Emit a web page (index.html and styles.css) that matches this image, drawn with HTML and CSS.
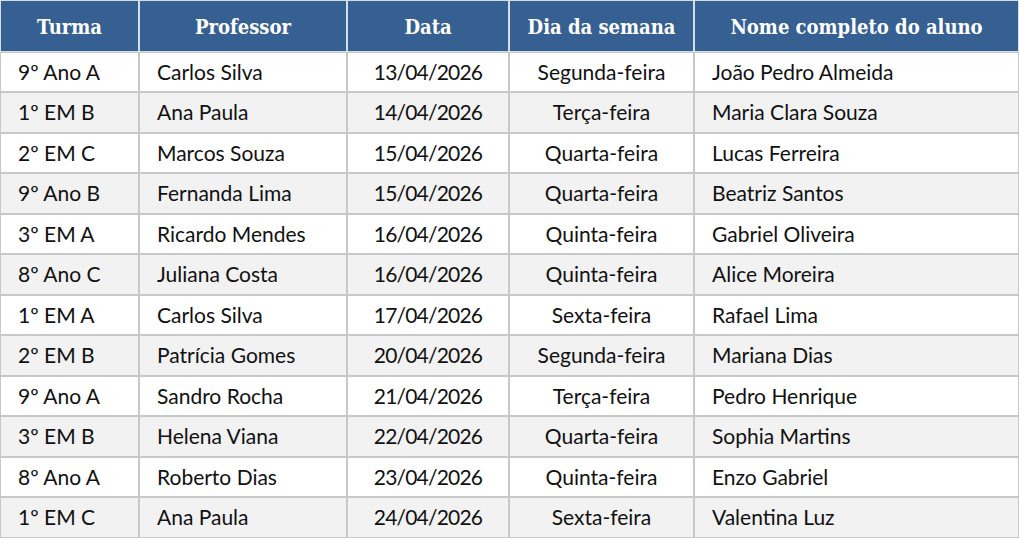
FILE: index.html
```html
<!DOCTYPE html>
<html lang="pt">
<head>
<meta charset="utf-8">
<link rel="stylesheet" href="styles.css">
</head>
<body>
<table class="grid">
  <colgroup>
    <col class="c1"><col class="c2"><col class="c3"><col class="c4"><col class="c5">
  </colgroup>
  <thead>
    <tr><th>Turma</th><th>Professor</th><th>Data</th><th>Dia da semana</th><th>Nome completo do aluno</th></tr>
  </thead>
  <tbody>
    <tr><td>9º Ano A</td><td>Carlos Silva</td><td class="ctr num">13/04/2026</td><td class="ctr">Segunda-feira</td><td>João Pedro Almeida</td></tr>
    <tr><td>1º EM B</td><td>Ana Paula</td><td class="ctr num">14/04/2026</td><td class="ctr">Terça-feira</td><td>Maria Clara Souza</td></tr>
    <tr><td>2º EM C</td><td>Marcos Souza</td><td class="ctr num">15/04/2026</td><td class="ctr">Quarta-feira</td><td>Lucas Ferreira</td></tr>
    <tr><td>9º Ano B</td><td>Fernanda Lima</td><td class="ctr num">15/04/2026</td><td class="ctr">Quarta-feira</td><td>Beatriz Santos</td></tr>
    <tr><td>3º EM A</td><td>Ricardo Mendes</td><td class="ctr num">16/04/2026</td><td class="ctr">Quinta-feira</td><td>Gabriel Oliveira</td></tr>
    <tr><td>8º Ano C</td><td>Juliana Costa</td><td class="ctr num">16/04/2026</td><td class="ctr">Quinta-feira</td><td>Alice Moreira</td></tr>
    <tr><td>1º EM A</td><td>Carlos Silva</td><td class="ctr num">17/04/2026</td><td class="ctr">Sexta-feira</td><td>Rafael Lima</td></tr>
    <tr><td>2º EM B</td><td>Patrícia Gomes</td><td class="ctr num">20/04/2026</td><td class="ctr">Segunda-feira</td><td>Mariana Dias</td></tr>
    <tr><td>9º Ano A</td><td>Sandro Rocha</td><td class="ctr num">21/04/2026</td><td class="ctr">Terça-feira</td><td>Pedro Henrique</td></tr>
    <tr><td>3º EM B</td><td>Helena Viana</td><td class="ctr num">22/04/2026</td><td class="ctr">Quarta-feira</td><td>Sophia Martins</td></tr>
    <tr><td>8º Ano A</td><td>Roberto Dias</td><td class="ctr num">23/04/2026</td><td class="ctr">Quinta-feira</td><td>Enzo Gabriel</td></tr>
    <tr><td>1º EM C</td><td>Ana Paula</td><td class="ctr num">24/04/2026</td><td class="ctr">Sexta-feira</td><td>Valentina Luz</td></tr>
  </tbody>
</table>
</body>
</html>
```
FILE: styles.css
```css
html, body {
  margin: 0;
  padding: 0;
  background: #ffffff;
}

.grid {
  border-collapse: separate;
  border-spacing: 0;
  table-layout: fixed;
  width: 1019px;
  font-family: Lato, "Liberation Sans", sans-serif;
  font-size: 21px;
  color: #111111;
}

.c1 { width: 139px; }
.c2 { width: 208px; }
.c3 { width: 162px; }
.c4 { width: 185px; }
.c5 { width: 325px; }

.grid th {
  background: #366092;
  color: #ffffff;
  font-family: "DejaVu Serif Condensed", "DejaVu Serif", "Liberation Serif", serif;
  font-stretch: condensed;
  font-weight: bold;
  font-size: 20px;
  line-height: 23.5px;
  padding: 15px 4px 11px;
  text-align: center;
  border: 1px solid #d5dde8;
  white-space: nowrap;
}

.grid td {
  padding: 8px 17px;
  line-height: 22.5px;
  text-align: left;
  border: 1px solid #c8c8c8;
  background: #ffffff;
  white-space: nowrap;
}

.grid tbody tr:nth-child(even) td {
  background: #f2f2f2;
}

.grid td.ctr {
  text-align: center;
}

.grid td.num {
  letter-spacing: -0.8px;
}
```
